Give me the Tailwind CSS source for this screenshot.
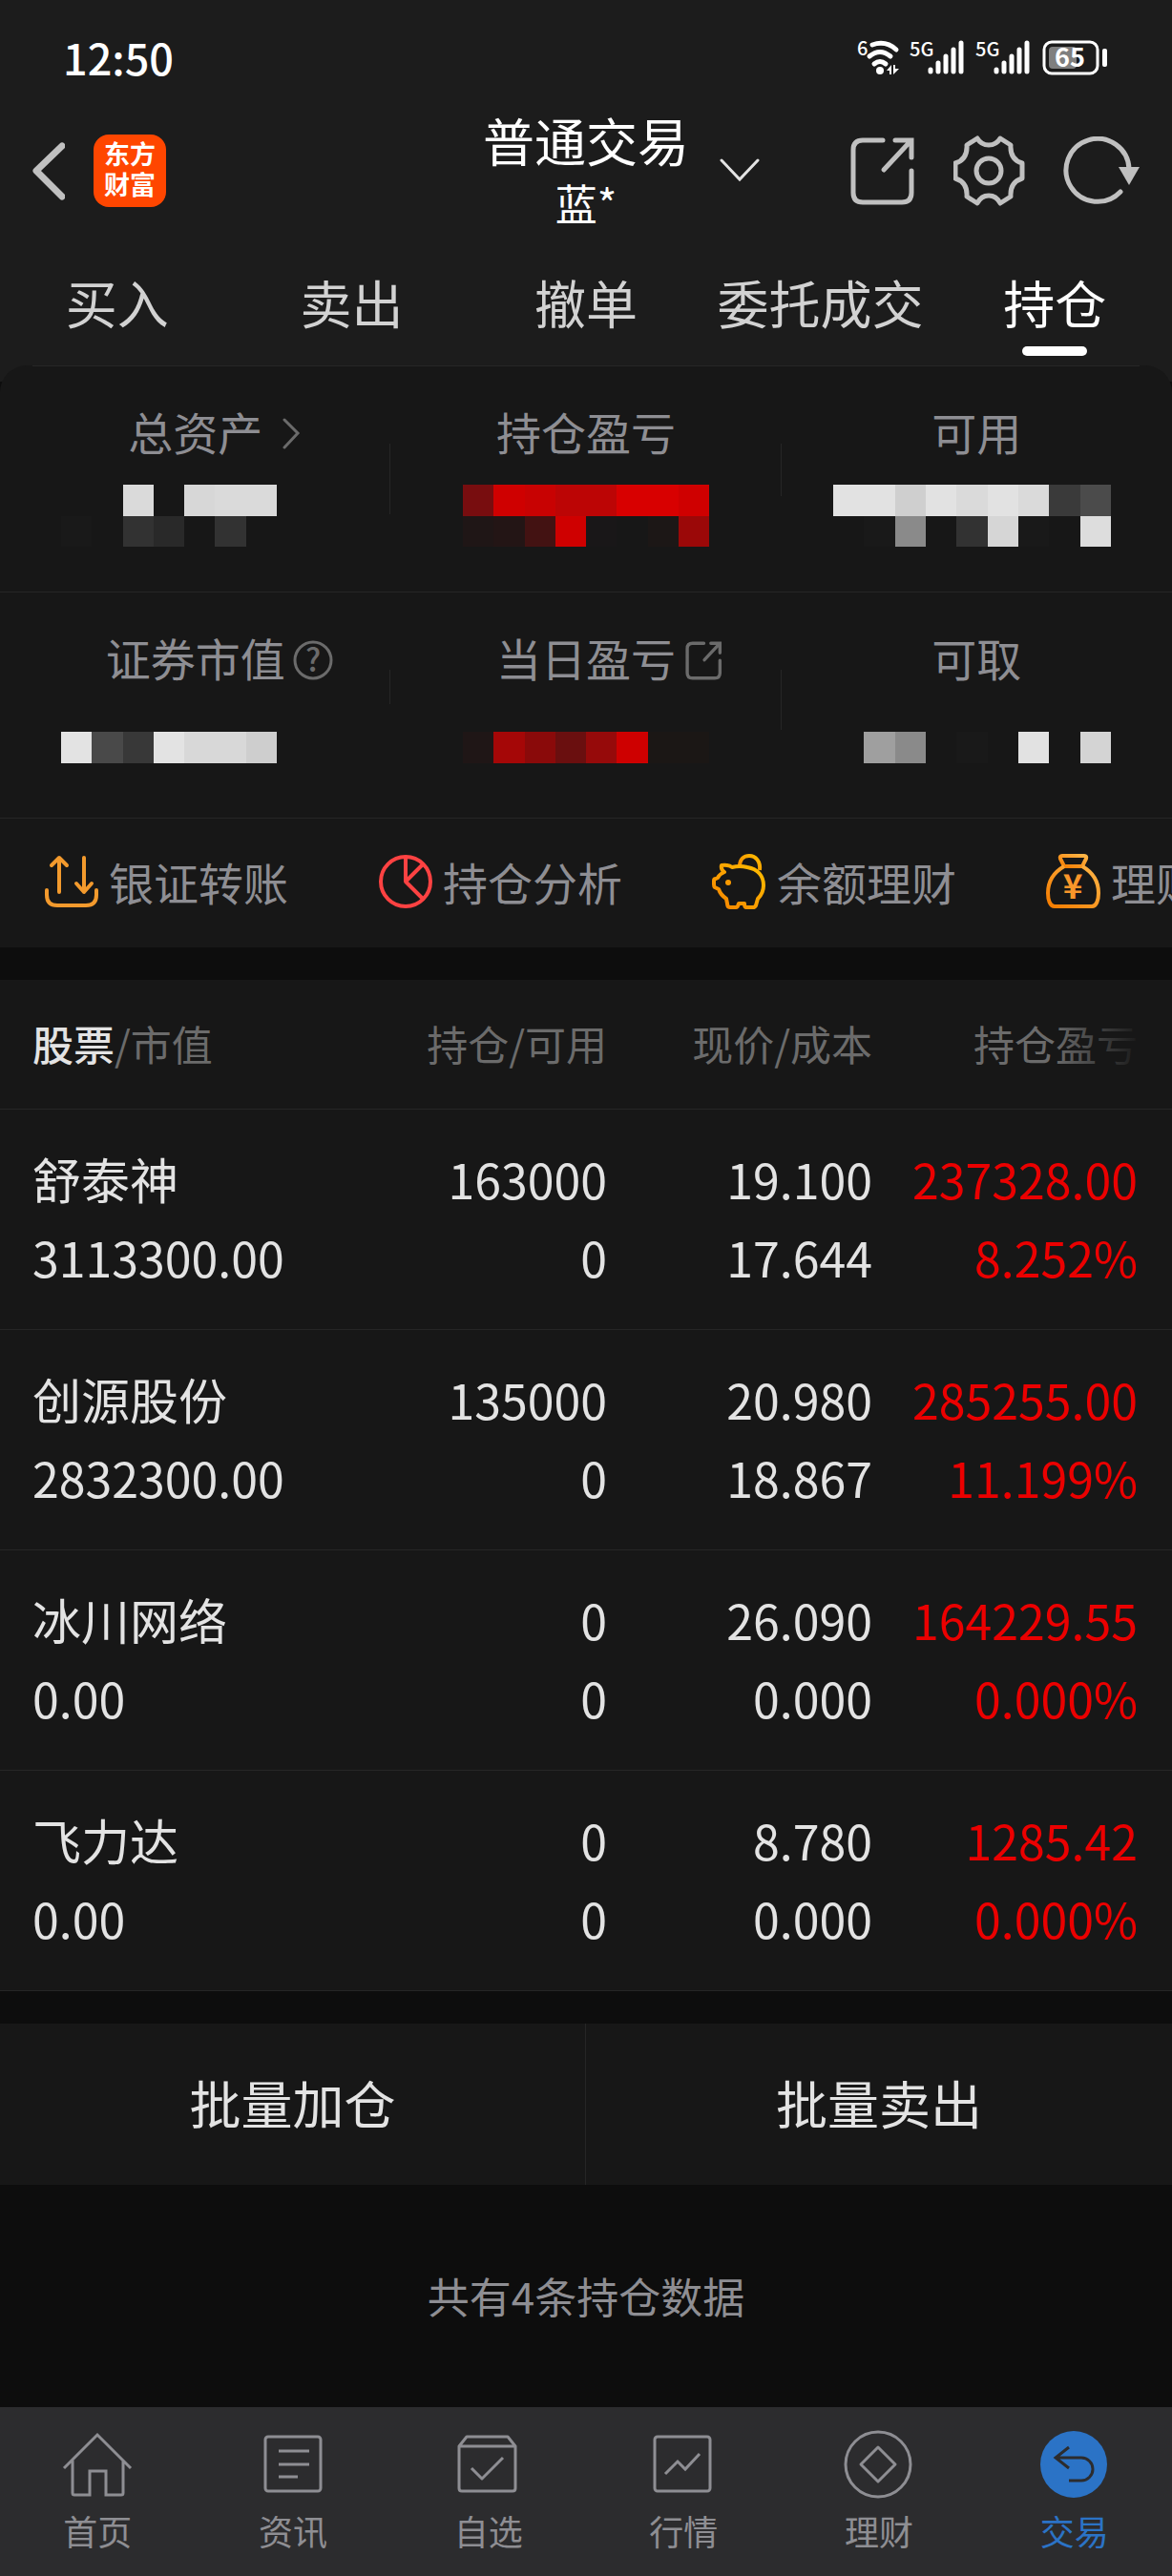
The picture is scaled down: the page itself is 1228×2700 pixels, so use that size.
<!DOCTYPE html>
<html lang="zh-CN">
<head>
  <meta charset="UTF-8"/>
  <meta name="viewport" content="width=device-width, initial-scale=1.0"/>
  <title>普通交易 - 持仓</title>
  <script src="https://cdn.jsdelivr.net/npm/@tailwindcss/browser@4"></script>
</head>
<body class="min-h-screen flex flex-col overflow-x-hidden bg-[#0d0d0d] font-['Noto_Sans_CJK_SC',sans-serif] text-[#e3e3e3]">

  <header class="bg-[#1c1c1c]">
    <!-- status bar -->
    <div class="flex items-center justify-between pt-8 pb-[25px] pl-[66px] pr-[68px] text-white">
      <span class="text-[45px] leading-[56px] font-medium">12:50</span>
      <div class="flex items-center gap-[11px]">
        <svg class="overflow-visible" width="44" height="38" viewBox="0 0 44 38" fill="none" stroke="currentColor" stroke-width="5" stroke-linecap="round">
          <text x="-1" y="17" font-size="20" font-weight="500" fill="currentColor" stroke="none">6</text>
          <path d="M15 6Q29 1 40 11M12 18Q23 9 34 18M17 26Q23 21 29 26"/>
          <circle cx="23" cy="33" r="4" fill="currentColor" stroke="none"/>
          <path d="M30 33L35 27V37H33V33ZM37 27H39V31H43L37 37Z" fill="currentColor" stroke="none"/>
        </svg>
        <svg class="overflow-visible" width="58" height="38" viewBox="0 0 58 38" fill="none" stroke="currentColor" stroke-width="5" stroke-linecap="round">
          <text x="-1" y="18" font-size="20" font-weight="500" fill="currentColor" stroke="none">5G</text>
          <path d="M21 32V34M29 25V34M37 18V34M45 11V34M53 4V34"/>
        </svg>
        <svg class="overflow-visible" width="58" height="38" viewBox="0 0 58 38" fill="none" stroke="currentColor" stroke-width="5" stroke-linecap="round">
          <text x="-1" y="18" font-size="20" font-weight="500" fill="currentColor" stroke="none">5G</text>
          <path d="M21 32V34M29 25V34M37 18V34M45 11V34M53 4V34"/>
        </svg>
        <svg class="overflow-visible" width="68" height="38" viewBox="0 0 68 38" fill="currentColor">
          <rect x="2" y="3" width="56" height="33" rx="8" fill="none" stroke="currentColor" stroke-width="3"/>
          <rect x="7" y="8" width="29" height="23" rx="4" fill="#7f7f7f"/>
          <rect x="63" y="10" width="5" height="19" rx="2"/>
          <text x="29" y="29" font-size="27" font-weight="700" text-anchor="middle">65</text>
        </svg>
      </div>
    </div>

    <!-- title bar -->
    <div class="grid grid-cols-[1fr_auto_1fr] items-center px-[34px]">
      <div class="flex items-center gap-[30px]">
        <button type="button" aria-label="返回" class="text-[#c0c0c0]">
          <svg width="34" height="61" viewBox="0 0 34 61" fill="none" stroke="currentColor" stroke-width="7" stroke-linecap="round" stroke-linejoin="round"><path d="M31 4L4 30L31 57"/></svg>
        </button>
        <div class="flex h-[76px] w-[76px] items-center justify-center rounded-2xl bg-[#ff4600] pb-1 text-[27px] leading-8 font-bold text-white">
          <span>东方<br/>财富</span>
        </div>
      </div>
      <div class="relative pt-[2px] text-center leading-[64px] text-white">
        <h1 class="text-[54px]">普通交易</h1>
        <p class="text-[44px] leading-[66px]">蓝*</p>
        <button type="button" aria-label="切换账户" class="absolute top-[52px] left-full ml-8 text-[#e3e3e3]">
          <svg width="42" height="26" viewBox="0 0 42 26" fill="none" stroke="currentColor" stroke-width="3" stroke-linecap="round"><path d="M2 3L21 23L40 3"/></svg>
        </button>
      </div>
      <div class="flex items-center justify-end gap-10 text-[#c0c0c0]">
        <button type="button" aria-label="分享">
          <svg width="68" height="73" viewBox="0 0 68 73" fill="none" stroke="currentColor" stroke-width="5" stroke-linecap="round"><path d="M34 4H13Q3 4 3 14V59Q3 69 13 69H54Q64 69 64 59V36M47 4H64V22M62 6L35 35"/></svg>
        </button>
        <button type="button" aria-label="设置">
          <svg width="75" height="74" viewBox="0 0 75 74" fill="none" stroke="currentColor" stroke-width="5" stroke-linejoin="round"><path d="M14 10L25 3Q29 10 37 10Q45 10 49 3L60 10Q59 25 72 29V45Q59 49 60 64L49 71Q45 63 37 63Q29 63 25 71L14 64Q15 49 2 45V29Q15 25 14 10Z"/><circle cx="37" cy="37" r="13"/></svg>
        </button>
        <button type="button" aria-label="刷新">
          <svg width="80" height="73" viewBox="0 0 80 73" fill="none" stroke="currentColor" stroke-width="5"><path d="M60 58A33 33 0 1 1 69 34" stroke-linecap="round"/><path d="M58 32H80L69 51Z" fill="currentColor" stroke="none"/></svg>
        </button>
      </div>
    </div>

    <!-- tabs -->
    <nav class="grid grid-cols-5 pt-9 text-[54px] leading-[72px] whitespace-nowrap text-[#d2d2d2]">
      <a href="#" class="text-center">买入</a>
      <a href="#" class="text-center">卖出</a>
      <a href="#" class="text-center">撤单</a>
      <a href="#" class="text-center">委托成交</a>
      <a href="#" class="flex flex-col items-center gap-[10px] pb-[10px] text-white">持仓<span class="h-[10px] w-[68px] rounded-full bg-white"></span></a>
    </nav>
  </header>

  <main class="flex flex-1 flex-col">
    <!-- account summary -->
    <div class="bg-[linear-gradient(#1c1c1c_17px,#0d0d0d_17px)]">
      <section class="rounded-t-[28px] bg-[#171717] text-[47px] leading-[60px] text-[#8e8e93]">
        <div class="mx-[34px] h-px bg-[#262626]"></div>
        <div class="grid grid-cols-3 border-b border-[#262626]">
          <div class="relative pt-[38px] pb-[47px]">
            <div class="flex justify-center">
              <a href="#" class="relative">总资产
                <svg class="absolute top-[15px] left-full ml-5" width="20" height="34" viewBox="0 0 20 34" fill="none" stroke="#6b6b6b" stroke-width="3" stroke-linecap="round"><path d="M3 3L17 17L3 32"/></svg>
              </a>
            </div>
            <svg class="mt-[26px] ml-16" width="226" height="65" viewBox="0 0 7 2" preserveAspectRatio="none" shape-rendering="crispEdges">
              <path fill="#dadada" d="M2 0h1v1h-1zM5 0h2v1h-2z"/><path fill="#d7d7d7" d="M4 0h1v1h-1z"/>
              <path fill="#191919" d="M0 1h1v1h-1z"/><path fill="#323232" d="M2 1h1v1h-1zM5 1h1v1h-1z"/><path fill="#292929" d="M3 1h1v1h-1z"/>
            </svg>
            <span class="absolute top-[81px] right-0 h-[74px] w-px bg-[#262626]"></span>
          </div>
          <div class="relative pt-[38px] pb-[47px]">
            <div class="text-center">持仓盈亏</div>
            <svg class="mt-[26px] ml-[76px]" width="258" height="65" viewBox="0 0 8 2" preserveAspectRatio="none" shape-rendering="crispEdges">
              <path fill="#780d0f" d="M0 0h1v1h-1z"/><path fill="#cf0000" d="M1 0h1v1h-1zM7 0h1v1h-1zM3 1h1v1h-1z"/><path fill="#c80202" d="M2 0h1v1h-1z"/>
              <path fill="#bc0505" d="M3 0h2v1h-2z"/><path fill="#d80000" d="M5 0h2v1h-2z"/>
              <path fill="#1f1616" d="M0 1h1v1h-1z"/><path fill="#231515" d="M1 1h1v1h-1z"/><path fill="#431212" d="M2 1h1v1h-1z"/>
              <path fill="#191718" d="M4 1h1v1h-1z"/><path fill="#1c1716" d="M6 1h1v1h-1z"/><path fill="#9b0808" d="M7 1h1v1h-1z"/>
            </svg>
            <span class="absolute top-[81px] right-0 h-[55px] w-px bg-[#262626]"></span>
          </div>
          <div class="pt-[38px] pb-[47px]">
            <div class="text-center">可用</div>
            <svg class="mt-[26px] ml-[54px]" width="291" height="65" viewBox="0 0 9 2" preserveAspectRatio="none" shape-rendering="crispEdges">
              <path fill="#e2e2e2" d="M0 0h2v1h-2zM3 0h1v1h-1zM5 0h1v1h-1z"/><path fill="#cfcfcf" d="M2 0h1v1h-1z"/><path fill="#dadada" d="M4 0h1v1h-1zM6 0h1v1h-1z"/>
              <path fill="#3a3a3a" d="M7 0h1v1h-1z"/><path fill="#4b4b4b" d="M8 0h1v1h-1z"/>
              <path fill="#191919" d="M1 1h1v1h-1zM6 1h1v1h-1z"/><path fill="#8a8a8a" d="M2 1h1v1h-1z"/><path fill="#323232" d="M4 1h1v1h-1z"/>
              <path fill="#d6d6d6" d="M5 1h1v1h-1z"/><path fill="#dddddd" d="M8 1h1v1h-1z"/>
            </svg>
          </div>
        </div>
        <div class="grid grid-cols-3 border-b border-[#262626]">
          <div class="relative pt-[38px] pb-[57px]">
            <div class="flex justify-center">
              <div class="relative">证券市值
                <button type="button" aria-label="说明" class="absolute top-3 left-full ml-2">
                  <svg class="overflow-visible" width="42" height="42" viewBox="0 0 42 42" fill="none" stroke="#6b6b6b" stroke-width="3"><circle cx="21" cy="21" r="19"/><text x="21" y="33" font-size="33" font-weight="500" text-anchor="middle" fill="#6b6b6b" stroke="none">?</text></svg>
                </button>
              </div>
            </div>
            <svg class="mt-12 ml-16" width="226" height="33" viewBox="0 0 7 1" preserveAspectRatio="none" shape-rendering="crispEdges">
              <path fill="#e3e3e3" d="M0 0h1v1h-1zM3 0h1v1h-1z"/><path fill="#494949" d="M1 0h1v1h-1z"/><path fill="#383838" d="M2 0h1v1h-1z"/>
              <path fill="#d8d8d8" d="M4 0h2v1h-2z"/><path fill="#cecece" d="M6 0h1v1h-1z"/>
            </svg>
            <span class="absolute top-[81px] right-0 h-[36px] w-px bg-[#262626]"></span>
          </div>
          <div class="relative pt-[38px] pb-[57px]">
            <div class="flex justify-center">
              <a href="#" class="relative">当日盈亏
                <svg class="absolute top-[13px] left-full ml-[10px]" width="39" height="41" viewBox="0 0 68 73" fill="none" stroke="#6b6b6b" stroke-width="6" stroke-linecap="round"><path d="M34 4H13Q3 4 3 14V59Q3 69 13 69H54Q64 69 64 59V36M47 4H64V22M62 6L35 35"/></svg>
              </a>
            </div>
            <svg class="mt-12 ml-[76px]" width="258" height="33" viewBox="0 0 8 1" preserveAspectRatio="none" shape-rendering="crispEdges">
              <path fill="#1f1616" d="M0 0h1v1h-1z"/><path fill="#a50707" d="M1 0h1v1h-1z"/><path fill="#8a0a0a" d="M2 0h1v1h-1z"/><path fill="#6a0f0f" d="M3 0h1v1h-1z"/>
              <path fill="#960a0a" d="M4 0h1v1h-1z"/><path fill="#ce0000" d="M5 0h1v1h-1z"/><path fill="#1b1715" d="M6 0h2v1h-2z"/>
            </svg>
            <span class="absolute top-[81px] right-0 h-[63px] w-px bg-[#262626]"></span>
          </div>
          <div class="pt-[38px] pb-[57px]">
            <div class="text-center">可取</div>
            <svg class="mt-12 ml-[54px]" width="291" height="33" viewBox="0 0 9 1" preserveAspectRatio="none" shape-rendering="crispEdges">
              <path fill="#9f9f9f" d="M1 0h1v1h-1z"/><path fill="#8a8a8a" d="M2 0h1v1h-1z"/><path fill="#191919" d="M4 0h1v1h-1z"/>
              <path fill="#e2e2e2" d="M6 0h1v1h-1z"/><path fill="#d4d4d4" d="M8 0h1v1h-1z"/>
            </svg>
          </div>
        </div>

        <!-- shortcuts, scroll sideways -->
        <div class="flex h-[135px] items-center overflow-hidden pb-1 pl-[46px] whitespace-nowrap">
          <a href="#" class="flex w-[350px] shrink-0 items-center gap-[10px]">
            <svg width="58" height="58" viewBox="0 0 58 58" fill="none" stroke="#f39a2d" stroke-width="4" stroke-linecap="round" stroke-linejoin="round"><path d="M16 40V4M8 12L16 4L24 12M42 4V40M34 31L42 40L50 31M3 38V43Q3 54 14 54H44Q55 54 55 43V38"/></svg>
            银证转账
          </a>
          <a href="#" class="flex w-[350px] shrink-0 items-center gap-[10px]">
            <svg width="58" height="58" viewBox="0 0 58 58" fill="none" stroke="#fd4242" stroke-width="4" stroke-linejoin="round"><circle cx="29" cy="29" r="26"/><path d="M29 3V29L47 11M29 29L47 47"/></svg>
            持仓分析
          </a>
          <a href="#" class="flex w-[350px] shrink-0 items-center gap-[10px]">
            <svg width="58" height="58" viewBox="0 0 58 58" fill="none" stroke="url(#pig)" stroke-width="4" stroke-linejoin="round">
              <defs><linearGradient id="pig" x1="1" y1="0" x2="0" y2="1"><stop offset="0" stop-color="#ffbe00"/><stop offset="1" stop-color="#f68400"/></linearGradient></defs>
              <path d="M29 13C29 5 34 2 39 2C46 2 51 8 50 17"/>
              <path d="M10 12Q17 11 21 14Q29 12 37 14C48 16 54 23 54 33C54 40 51 44 48 47L46 54Q45 56 43 56H36Q34 56 34 52H28Q27 56 25 56H19Q16 56 16 52L15 47Q9 43 7 37L3 35Q2 34 2 32V28Q2 26 4 26L6 25Q8 21 13 19Q9 16 10 12Z"/>
              <circle cx="17" cy="30" r="3" fill="#f99a00" stroke="none"/>
            </svg>
            余额理财
          </a>
          <a href="#" class="flex w-[350px] shrink-0 items-center gap-[10px]">
            <svg width="58" height="58" viewBox="0 0 58 58" fill="none" stroke="url(#bag)" stroke-width="4" stroke-linejoin="round">
              <defs><linearGradient id="bag" x1="1" y1="0" x2="0" y2="1"><stop offset="0" stop-color="#ffb648"/><stop offset="1" stop-color="#f57c00"/></linearGradient></defs>
              <path d="M17 2H40Q43 2 42 5L38 13H19L15 5Q14 2 17 2Z"/>
              <path d="M19 13C7 20 2 30 2 41C2 48 4 55 9 55H48C53 55 55 48 55 41C55 30 50 20 38 13"/>
              <text x="28" y="47" font-size="35" font-weight="700" text-anchor="middle" fill="#f9962a" stroke="none">¥</text>
            </svg>
            理财产品
          </a>
        </div>
      </section>
    </div>

    <!-- holdings -->
    <table class="mt-[34px] w-full table-fixed border-collapse bg-[#171717]">
      <thead>
        <tr class="h-[135px] border-b border-[#262626] text-[43px] leading-[60px] text-[#6b6b6b]">
          <th class="pb-[2px] pl-[34px] text-left font-normal"><span class="font-medium text-[#e3e3e3]">股票</span>/市值</th>
          <th class="w-[278px] pb-[2px] text-right font-normal">持仓/可用</th>
          <th class="w-[278px] pb-[2px] text-right font-normal">现价/成本</th>
          <th class="relative w-[314px] pr-9 pb-[2px] text-right font-normal">持仓盈亏<span class="absolute inset-y-0 right-0 w-[124px] bg-linear-to-r from-[#171717]/0 to-[#171717] to-75%"></span></th>
        </tr>
      </thead>
      <tbody class="text-right text-[50px] leading-[82px]">
        <tr class="border-b border-[#262626]">
          <td class="pt-[31px] pb-[35px] pl-[34px] text-left"><div class="text-[51px]">舒泰神</div><div>3113300.00</div></td>
          <td class="pt-[31px] pb-[35px]"><div>163000</div><div>0</div></td>
          <td class="pt-[31px] pb-[35px]"><div>19.100</div><div>17.644</div></td>
          <td class="pt-[31px] pr-9 pb-[35px] text-[#eb0000]"><div>237328.00</div><div>8.252%</div></td>
        </tr>
        <tr class="border-b border-[#262626]">
          <td class="pt-[31px] pb-[35px] pl-[34px] text-left"><div class="text-[51px]">创源股份</div><div>2832300.00</div></td>
          <td class="pt-[31px] pb-[35px]"><div>135000</div><div>0</div></td>
          <td class="pt-[31px] pb-[35px]"><div>20.980</div><div>18.867</div></td>
          <td class="pt-[31px] pr-9 pb-[35px] text-[#eb0000]"><div>285255.00</div><div>11.199%</div></td>
        </tr>
        <tr class="border-b border-[#262626]">
          <td class="pt-[31px] pb-[35px] pl-[34px] text-left"><div class="text-[51px]">冰川网络</div><div>0.00</div></td>
          <td class="pt-[31px] pb-[35px]"><div>0</div><div>0</div></td>
          <td class="pt-[31px] pb-[35px]"><div>26.090</div><div>0.000</div></td>
          <td class="pt-[31px] pr-9 pb-[35px] text-[#eb0000]"><div>164229.55</div><div>0.000%</div></td>
        </tr>
        <tr class="border-b border-[#262626]">
          <td class="pt-[31px] pb-[35px] pl-[34px] text-left"><div class="text-[51px]">飞力达</div><div>0.00</div></td>
          <td class="pt-[31px] pb-[35px]"><div>0</div><div>0</div></td>
          <td class="pt-[31px] pb-[35px]"><div>8.780</div><div>0.000</div></td>
          <td class="pt-[31px] pr-9 pb-[35px] text-[#eb0000]"><div>1285.42</div><div>0.000%</div></td>
        </tr>
      </tbody>
    </table>

    <div class="mt-[34px] grid h-[169px] grid-cols-2 bg-[#171717] text-[54px]">
      <button type="button" class="border-r border-[#262626] pb-1">批量加仓</button>
      <button type="button" class="pb-1">批量卖出</button>
    </div>

    <p class="flex flex-1 items-center justify-center text-[44px] text-[#8e8e93]">共有4条持仓数据</p>
  </main>

  <!-- bottom navigation -->
  <nav class="grid grid-cols-6 bg-[#2c2c2e] pt-[23px] pb-6 text-[36px] leading-[48px] text-[#8e8e93]">
    <a href="#" class="flex flex-col items-center gap-2">
      <svg width="74" height="74" viewBox="0 0 74 74" fill="none" stroke="currentColor" stroke-width="3"><path d="M2 41L37 6L72 41M11 33V67Q11 69 13 69H29V44H46V69H62Q64 69 64 67V33"/></svg>
      首页
    </a>
    <a href="#" class="flex flex-col items-center gap-2">
      <svg width="74" height="74" viewBox="0 0 74 74" fill="none" stroke="currentColor" stroke-width="3"><rect x="8" y="8" width="58" height="57" rx="3"/><path d="M22 23H54M22 37H54M22 50H42"/></svg>
      资讯
    </a>
    <a href="#" class="flex flex-col items-center gap-2">
      <svg width="74" height="74" viewBox="0 0 74 74" fill="none" stroke="currentColor" stroke-width="3" stroke-linejoin="round"><path d="M6 18L14 8H57L65 18V62Q65 65 62 65H9Q6 65 6 62ZM6 18H65M19 41L30 52L52 30"/></svg>
      自选
    </a>
    <a href="#" class="flex flex-col items-center gap-2">
      <svg width="74" height="74" viewBox="0 0 74 74" fill="none" stroke="currentColor" stroke-width="3"><rect x="7" y="8" width="58" height="57" rx="3"/><path d="M18 47L31 34L39 42L54 26"/></svg>
      行情
    </a>
    <a href="#" class="flex flex-col items-center gap-2">
      <svg width="74" height="74" viewBox="0 0 74 74" fill="none" stroke="currentColor" stroke-width="3" stroke-linejoin="round"><circle cx="36" cy="37" r="34"/><path d="M36 19L54 37L36 55L18 37Z"/></svg>
      理财
    </a>
    <a href="#" class="flex flex-col items-center gap-2 text-[#2b73c6]">
      <svg width="74" height="74" viewBox="0 0 74 74" fill="none" stroke="#2c2c2e" stroke-width="3"><circle cx="36" cy="37" r="35" fill="currentColor" stroke="none"/><path d="M31 19L17 30L31 41M17 30H44A12 12 0 0 1 44 54H31"/></svg>
      交易
    </a>
  </nav>

</body>
</html>
